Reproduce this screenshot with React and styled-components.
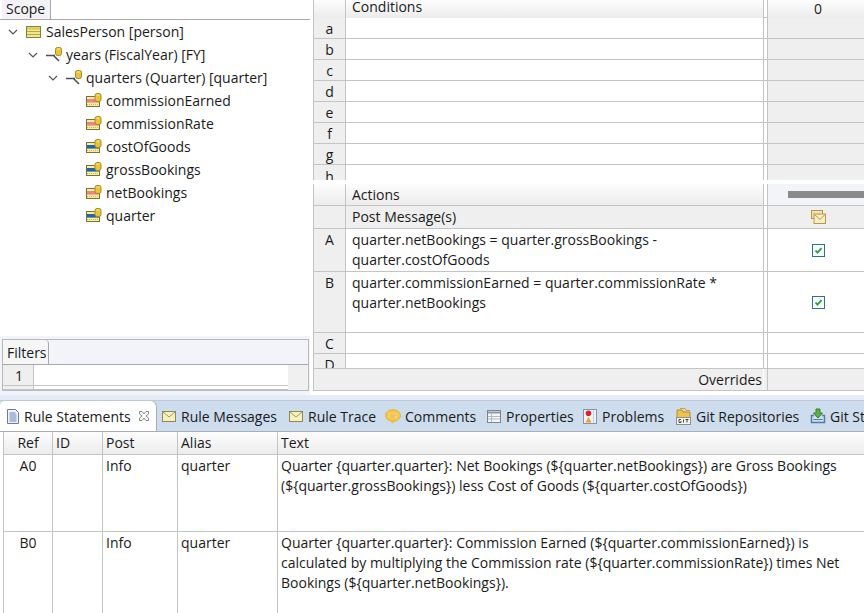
import React from 'react';
import styled, { createGlobalStyle } from 'styled-components';

const GlobalStyle = createGlobalStyle`
  html, body { margin: 0; padding: 0; background: #fff; }
  body { font-family: "Open Sans", "Noto Sans", sans-serif; font-size: 14px; color: #1a1a1a; }
`;

const LINE = '#c4c4c4';

const Page = styled.div`
  width: 864px;
  height: 613px;
  overflow: hidden;
  display: flex;
  flex-direction: column;
  background: #fff;
`;

const TopArea = styled.div`
  height: 395px;
  flex: none;
  display: flex;
`;

const LeftPane = styled.div`
  width: 310px;
  flex: none;
  display: flex;
  flex-direction: column;
`;

const ScopeBar = styled.div`
  height: 20px;
  flex: none;
  box-sizing: border-box;
  display: flex;
  padding-left: 2px;
  background: #fff;
  border-bottom: 1px solid #a9a9a9;
`;

const ScopeTab = styled.div`
  width: 49px;
  padding-left: 4px;
  box-sizing: border-box;
  background: #f2f2f8;
  border-right: 1px solid #a9a9a9;
  line-height: 18px;
`;

const Tree = styled.div`
  flex: 1;
`;

const TreeRow = styled.div`
  height: 23px;
  display: flex;
  align-items: center;
  padding-left: ${(p) => p.$indent}px;
  white-space: nowrap;
`;

const Twist = styled.svg`
  width: 10px;
  height: 8px;
  flex: none;
  margin-right: 8px;
`;

const TreeLabel = styled.span`
  margin-left: ${(p) => p.$left || 0}px;
`;

const Filters = styled.div`
  height: 56px;
  flex: none;
  background: #f3f3fa;
  padding: 3px 1px 0 2px;
`;

const FilterBox = styled.div`
  height: 52px;
  box-sizing: border-box;
  border: 1px solid #b9b9b9;
  display: flex;
  flex-direction: column;
`;

const FilterTabs = styled.div`
  height: 25px;
  flex: none;
  box-sizing: border-box;
  border-bottom: 1px solid #a9a9a9;
  background: #f3f3fa;
`;

const FilterTab = styled.div`
  width: 46px;
  height: 24px;
  box-sizing: border-box;
  padding-left: 4px;
  line-height: 26px;
  background: #f6f6f6;
  border-right: 1px solid #a9a9a9;
  border-top-right-radius: 4px;
`;

const FilterBody = styled.div`
  flex: 1;
  display: flex;
  background: #f0f0f0;
`;

const FilterGrid = styled.div`
  width: 285px;
  background: #fff;
  display: grid;
  grid-template-columns: 31px 1fr;
  grid-template-rows: 21px 1fr;
`;

const FilterNum = styled.div`
  background: #efefef;
  border-right: 1px solid ${LINE};
  border-bottom: 1px solid ${LINE};
  text-align: center;
  line-height: 21px;
  padding-left: 2px;
`;

const FilterCell = styled.div`
  border-bottom: 1px solid ${LINE};
`;

const RightPane = styled.div`
  margin-left: 3px;
  flex: 1;
  min-width: 0;
  display: flex;
  flex-direction: column;
`;

const Section = styled.div`
  margin-top: ${(p) => p.$top || 0}px;
`;

const GridRow = styled.div`
  height: ${(p) => p.$h}px;
  box-sizing: border-box;
  display: grid;
  grid-template-columns: 32px 418px 1fr;
  border-bottom: ${(p) => (p.$noLine ? 'none' : `1px solid ${LINE}`)};
  border-left: 1px solid ${LINE};
`;

const cellTone = (p) =>
  p.$tone === 'head'
    ? 'linear-gradient(#fdfdfd, #ececec)'
    : p.$tone === 'grey'
      ? '#efefef'
      : '#fff';

const LabelCell = styled.div`
  background: ${cellTone};
  border-right: 1px solid ${LINE};
  text-align: center;
  line-height: 20px;
  padding-top: ${(p) => p.$pad || 0}px;
  overflow: hidden;
`;

const TextCell = styled.div`
  background: ${cellTone};
  padding: ${(p) => p.$pad ?? 2}px 4px 0 6px;
  line-height: ${(p) => p.$line || 20}px;
  white-space: pre-line;
  overflow: hidden;
  border-right: 1px solid ${LINE};
`;

const MarkCell = styled.div`
  margin-left: 3px;
  background: ${cellTone};
  border-left: 1px solid ${LINE};
  display: flex;
  align-items: center;
  justify-content: center;
  padding-left: 4px;
  line-height: 18px;
`;

const ProgressCell = styled(MarkCell)`
  justify-content: flex-start;
  padding: 0 0 0 20px;
  background: #f3f3fa;
`;

const Progress = styled.div`
  width: 100%;
  height: 7px;
  background: #8a8a8a;
`;

const OverrideRow = styled.div`
  height: 23px;
  box-sizing: border-box;
  display: grid;
  grid-template-columns: 450px 1fr;
  border: 1px solid ${LINE};
  border-right: none;
  background: #efefef;
`;

const OverrideLabel = styled.div`
  text-align: right;
  line-height: 21px;
  padding-right: 1px;
  border-right: 1px solid #fff;
`;

const OverrideMark = styled.div`
  margin-left: 3px;
  border-left: 1px solid ${LINE};
`;

const Bottom = styled.div`
  flex: 1;
  min-height: 0;
  display: flex;
  flex-direction: column;
  background: #e6ecf7;
  padding-top: 5px;
`;

const TabStrip = styled.div`
  height: 32px;
  flex: none;
  box-sizing: border-box;
  display: flex;
  background: #cddded;
  border-top: 1px solid #bfc8d6;
  border-bottom: 1px solid #a9aeb5;
  white-space: nowrap;
`;

const ActiveTab = styled.div`
  width: 157px;
  height: 31px;
  margin-top: -1px;
  flex: none;
  box-sizing: border-box;
  display: flex;
  align-items: center;
  padding-left: 7px;
  gap: 5px;
  background: #fff;
  border-right: 1px solid #a9aeb5;
  border-top: 1px solid #bfc8d6;
  border-top-right-radius: 7px;
  border-top-left-radius: 5px;
`;

const CloseBox = styled.svg`
  width: 10px;
  height: 10px;
  flex: none;
  margin-left: 3px;
`;

const Tab = styled.div`
  width: ${(p) => p.$w}px;
  flex: none;
  display: flex;
  align-items: center;
  gap: ${(p) => p.$gap || 5}px;
  padding-left: ${(p) => p.$left || 5}px;
  box-sizing: border-box;
`;

const TableWrap = styled.div`
  flex: 1;
  background: #fff;
  padding-left: 3px;
  overflow: hidden;
`;

const TableRow = styled.div`
  height: ${(p) => p.$h}px;
  box-sizing: border-box;
  display: grid;
  grid-template-columns: 49px 50px 75px 100px 1fr;
  background: ${(p) => (p.$head ? 'linear-gradient(#fdfdfd, #ececec)' : '#fff')};
  border-bottom: 1px solid ${LINE};
  border-left: 1px solid ${LINE};
`;

const TableCell = styled.div`
  border-right: ${(p) => (p.$last ? 'none' : `1px solid ${LINE}`)};
  padding: 1px 3px 0 3px;
  text-align: ${(p) => (p.$center ? 'center' : 'left')};
  line-height: 20px;
  white-space: pre-line;
`;

const Chevron = () => (
  <Twist viewBox="0 0 10 8">
    <path d="M1 2 L5 6 L9 2" fill="none" stroke="#555" strokeWidth="1.2" />
  </Twist>
);

const TableIcon = () => (
  <svg width="16" height="14" viewBox="0 0 16 14">
    <rect x="0.5" y="1.5" width="14" height="11" fill="#f3e68f" stroke="#85823a" />
    <path d="M1 3.500h13" stroke="#d6c65a" strokeWidth="2" />
    <path d="M1 6.500h13M1 9.500h13" stroke="#b3a94a" />
  </svg>
);

const Coin = ({ x, y }) => (
  <g transform={`translate(${x} ${y})`}>
    <rect x="0.5" y="0.5" width="6" height="8" rx="2" fill="#e9c33c" stroke="#a98a1e" />
    <path d="M2 2h3" stroke="#fbeb9d" />
  </g>
);

const RelationIcon = () => (
  <svg width="20" height="18" viewBox="0 0 20 18">
    <path d="M0 9.500h9M7 9l6 6" fill="none" stroke="#4c4f55" strokeWidth="1.6" />
    <Coin x={9} y={1} />
  </svg>
);

const FieldIcon = ({ color }) => (
  <svg width="16" height="15" viewBox="0 0 16 15">
    <rect x="0.5" y="3.5" width="13" height="10" fill="#f6eea6" stroke="#77742d" />
    <rect x="1" y="6" width="12" height="3.6" fill={color} />
    <path d="M1 11.500h12" stroke="#c5ba56" strokeDasharray="1 1" />
    <Coin x={8.5} y={0} />
  </svg>
);

const MailIcon = () => (
  <svg width="14" height="11" viewBox="0 0 14 11">
    <rect x="0.5" y="0.5" width="13" height="10" fill="#f6efc0" stroke="#8f8755" />
    <path d="M1 1l6 5 6-5" fill="none" stroke="#a69a58" />
  </svg>
);

const PostIcon = () => (
  <svg width="15" height="14" viewBox="0 0 15 14">
    <rect x="0.5" y="0.5" width="11" height="8" fill="#f2e3ae" stroke="#b8964a" />
    <rect x="3" y="4" width="11.5" height="9.5" fill="#f7eec6" stroke="#b8964a" />
    <path d="M3.500 4.500l5.500 5 5-5" fill="none" stroke="#b8964a" />
  </svg>
);

const CheckIcon = () => (
  <svg width="13" height="13" viewBox="0 0 13 13">
    <rect x="0.5" y="0.5" width="12" height="12" fill="#f7fbfb" stroke="#2f6f8f" />
    <path d="M3.500 6.500l2 2.200 4-4.600" fill="none" stroke="#2f9e3c" strokeWidth="1.8" />
  </svg>
);

const DocIcon = () => (
  <svg width="12" height="15" viewBox="0 0 12 15">
    <path d="M.5.5h8l3 3v11H.5z" fill="#eef2fa" stroke="#6a7a9a" />
    <path d="M2.500 4h6M2.500 6h7M2.500 8h7M2.500 10h7M2.500 12h7" stroke="#6d83b5" />
  </svg>
);

const CloseIcon = () => (
  <CloseBox viewBox="0 0 10 10">
    <path d="M.5.500h2.500L5 3l2-2.500h2.500v2.500L7 5l2.500 2v2.500H7L5 7 3 9.500H.5V7L3 5 .5 3z" fill="#fff" stroke="#8a8a8a" />
  </CloseBox>
);

const CommentIcon = () => (
  <svg width="16" height="15" viewBox="0 0 16 15">
    <ellipse cx="8" cy="6.500" rx="7.500" ry="5.800" fill="#f5c84a" stroke="#e5b23a" />
    <path d="M6 11.500l1 3 3-3z" fill="#f0b73a" />
    <path d="M4.500 4.500h7v4.500h-7z" fill="#f8e08d" />
    <path d="M5 6h6M5 8h5" stroke="#dda93a" />
  </svg>
);

const PropertiesIcon = () => (
  <svg width="14" height="13" viewBox="0 0 14 13">
    <rect x="0.500" y="0.500" width="13" height="12" fill="#f5f6f8" stroke="#7d848f" />
    <path d="M1 2.500h12" stroke="#8f97a5" strokeWidth="2" />
    <path d="M4.500 4v8M1 6.500h12M1 9h12" stroke="#b4bac4" />
  </svg>
);

const ProblemsIcon = () => (
  <svg width="14" height="15" viewBox="0 0 14 15">
    <rect x="0.500" y="0.500" width="13" height="14" fill="#eef1f6" stroke="#8a93a3" />
    <path d="M10.500 1v13" stroke="#c5cede" />
    <circle cx="5.500" cy="4.200" r="2.800" fill="#d8232a" />
    <path d="M5.500 8l3 5.500h-6z" fill="#eda02f" />
  </svg>
);

const GitIcon = () => (
  <svg width="15" height="17" viewBox="0 0 15 17">
    <path d="M1 2h5l1 2h7v7H1z" fill="#efc349" stroke="#b58f2a" />
    <path d="M4 .5h5l1 2h4" fill="none" stroke="#c8a23a" />
    <rect x="0.500" y="9.500" width="14" height="7" fill="#f5f5f5" stroke="#8d8d8d" />
    <path d="M5 11.500H3v3h2v-1.500M7.500 11.500v3M9.500 11.500h3M11 11.500v3" fill="none" stroke="#333" strokeWidth="0.9" />
  </svg>
);

const GitStagingIcon = () => (
  <svg width="16" height="16" viewBox="0 0 16 16">
    <path d="M4 7.500H1.500v7h13v-7H12" fill="none" stroke="#4f7fa8" strokeWidth="1.500" />
    <path d="M3.500 11.500h9" stroke="#4f7fa8" />
    <path d="M6 1h4v4h2.500L8 10 3.500 5H6z" fill="#5ab14a" stroke="#3a7d30" />
  </svg>
);

const conditions = ['a', 'b', 'c', 'd', 'e', 'f', 'g'];

const fields = [
  ['commissionEarned', '#ef8484'],
  ['commissionRate', '#ef8484'],
  ['costOfGoods', '#1f63ae'],
  ['grossBookings', '#1f63ae'],
  ['netBookings', '#ef8484'],
  ['quarter', '#1f63ae'],
];

const App = () => (
  <Page>
    <GlobalStyle />
    <TopArea>
      <LeftPane>
        <ScopeBar>
          <ScopeTab>Scope</ScopeTab>
        </ScopeBar>
        <Tree>
          <TreeRow $indent={8}>
            <Chevron />
            <TableIcon />
            <TreeLabel $left={4}>SalesPerson [person]</TreeLabel>
          </TreeRow>
          <TreeRow $indent={28}>
            <Chevron />
            <RelationIcon />
            <TreeLabel>years (FiscalYear) [FY]</TreeLabel>
          </TreeRow>
          <TreeRow $indent={48}>
            <Chevron />
            <RelationIcon />
            <TreeLabel>quarters (Quarter) [quarter]</TreeLabel>
          </TreeRow>
          {fields.map(([name, color]) => (
            <TreeRow key={name} $indent={86}>
              <FieldIcon color={color} />
              <TreeLabel $left={4}>{name}</TreeLabel>
            </TreeRow>
          ))}
        </Tree>
        <Filters>
          <FilterBox>
            <FilterTabs>
              <FilterTab>Filters</FilterTab>
            </FilterTabs>
            <FilterBody>
              <FilterGrid>
                <FilterNum>1</FilterNum>
                <FilterCell />
                <FilterNum />
                <FilterCell />
              </FilterGrid>
            </FilterBody>
          </FilterBox>
        </Filters>
      </LeftPane>
      <RightPane>
        <Section>
          <GridRow $h={18}>
            <LabelCell $tone="head" />
            <TextCell $tone="head" $pad={0} $line={14}>Conditions</TextCell>
            <MarkCell $tone="head">0</MarkCell>
          </GridRow>
          {conditions.map((label) => (
            <GridRow key={label} $h={21}>
              <LabelCell $tone="grey" $pad={1}>{label}</LabelCell>
              <TextCell />
              <MarkCell $tone="grey" />
            </GridRow>
          ))}
          <GridRow $h={15} $noLine>
            <LabelCell $tone="grey" $pad={2}>h</LabelCell>
            <TextCell />
            <MarkCell $tone="grey" />
          </GridRow>
        </Section>
        <Section $top={4}>
          <GridRow $h={22}>
            <LabelCell $tone="head" />
            <TextCell $tone="head" $pad={1}>Actions</TextCell>
            <ProgressCell><Progress /></ProgressCell>
          </GridRow>
          <GridRow $h={23}>
            <LabelCell $tone="grey" />
            <TextCell $tone="grey" $pad={1}>Post Message(s)</TextCell>
            <MarkCell $tone="grey"><PostIcon /></MarkCell>
          </GridRow>
          <GridRow $h={43}>
            <LabelCell $tone="grey" $pad={1}>A</LabelCell>
            <TextCell $pad={1}>{'quarter.netBookings = quarter.grossBookings -\nquarter.costOfGoods'}</TextCell>
            <MarkCell><CheckIcon /></MarkCell>
          </GridRow>
          <GridRow $h={61}>
            <LabelCell $tone="grey" $pad={1}>B</LabelCell>
            <TextCell $pad={1}>{'quarter.commissionEarned = quarter.commissionRate *\nquarter.netBookings'}</TextCell>
            <MarkCell><CheckIcon /></MarkCell>
          </GridRow>
          <GridRow $h={21}>
            <LabelCell $tone="grey" $pad={1}>C</LabelCell>
            <TextCell />
            <MarkCell />
          </GridRow>
          <GridRow $h={14} $noLine>
            <LabelCell $tone="grey" $pad={1}>D</LabelCell>
            <TextCell />
            <MarkCell />
          </GridRow>
          <OverrideRow>
            <OverrideLabel>Overrides</OverrideLabel>
            <OverrideMark />
          </OverrideRow>
        </Section>
      </RightPane>
    </TopArea>
    <Bottom>
      <TabStrip>
        <ActiveTab>
          <DocIcon />
          <span>Rule Statements</span>
          <CloseIcon />
        </ActiveTab>
        <Tab $w={127}><MailIcon />Rule Messages</Tab>
        <Tab $w={96}><MailIcon />Rule Trace</Tab>
        <Tab $w={102} $gap={4}><CommentIcon />Comments</Tab>
        <Tab $w={96}><PropertiesIcon />Properties</Tab>
        <Tab $w={93}><ProblemsIcon />Problems</Tab>
        <Tab $w={134}><GitIcon />Git Repositories</Tab>
        <Tab $w={120} $gap={4}><GitStagingIcon />Git Staging</Tab>
      </TabStrip>
      <TableWrap>
        <TableRow $h={23} $head>
          <TableCell $center>Ref</TableCell>
          <TableCell>ID</TableCell>
          <TableCell>Post</TableCell>
          <TableCell>Alias</TableCell>
          <TableCell $last>Text</TableCell>
        </TableRow>
        <TableRow $h={77}>
          <TableCell $center>A0</TableCell>
          <TableCell />
          <TableCell>Info</TableCell>
          <TableCell>quarter</TableCell>
          <TableCell $last>{'Quarter {quarter.quarter}: Net Bookings (${quarter.netBookings}) are Gross Bookings\n(${quarter.grossBookings}) less Cost of Goods (${quarter.costOfGoods})'}</TableCell>
        </TableRow>
        <TableRow $h={90}>
          <TableCell $center>B0</TableCell>
          <TableCell />
          <TableCell>Info</TableCell>
          <TableCell>quarter</TableCell>
          <TableCell $last>{'Quarter {quarter.quarter}: Commission Earned (${quarter.commissionEarned}) is\ncalculated by multiplying the Commission rate (${quarter.commissionRate}) times Net\nBookings (${quarter.netBookings}).'}</TableCell>
        </TableRow>
      </TableWrap>
    </Bottom>
  </Page>
);

export default App;
